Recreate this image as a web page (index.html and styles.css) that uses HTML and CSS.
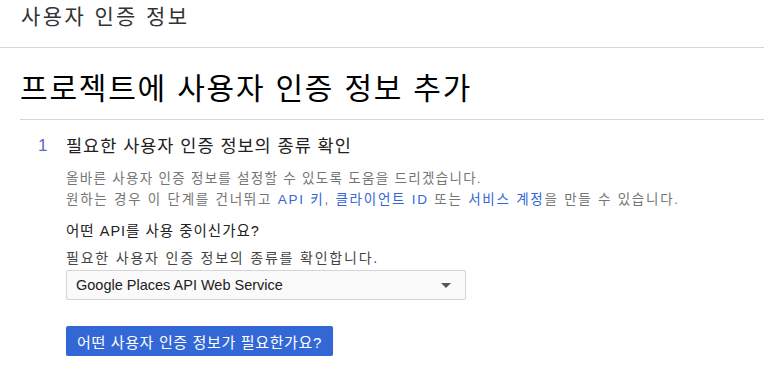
FILE: index.html
```html
<!DOCTYPE html>
<html lang="ko">
<head>
  <meta charset="UTF-8" />
  <title>사용자 인증 정보</title>
  <link rel="stylesheet" href="styles.css">
</head>
<body>
  <div class="topbar">
    <span class="topbar-title">사용자 인증 정보</span>
  </div>

  <div class="page">
    <h1 class="page-title">프로젝트에 사용자 인증 정보 추가</h1>

    <div class="step">
      <div class="step-num">1</div>
      <div class="step-body">
        <h2 class="step-title">필요한 사용자 인증 정보의 종류 확인</h2>
        <p class="desc">
          올바른 사용자 인증 정보를 설정할 수 있도록 도움을 드리겠습니다.<br>
          <span class="desc-wide">원하는 경우 이 단계를 건너뛰고 <a href="#">API 키</a>, <a href="#">클라이언트 ID</a> 또는 <a href="#">서비스 계정</a>을 만들 수 있습니다.</span>
        </p>

        <div class="question">어떤 API를 사용 중이신가요?</div>
        <div class="hint">필요한 사용자 인증 정보의 종류를 확인합니다.</div>

        <div class="select">
          <span>Google Places API Web Service</span>
          <span class="caret"></span>
        </div>

        <button class="btn" type="button">어떤 사용자 인증 정보가 필요한가요?</button>
      </div>
    </div>
  </div>
</body>
</html>
```

FILE: styles.css
```css
body {
  margin: 0;
  font-family: "Liberation Sans", "Noto Sans CJK KR", sans-serif;
  color: #212121;
  background: white;
}

.topbar {
  height: 47px;
  border-bottom: 1px solid #d6d6d6;
  padding-left: 21px;
  display: flex;
  align-items: flex-start;
}

.topbar-title {
  font-size: 21px;
  line-height: 34px;
  letter-spacing: 2.4px;
  color: #333;
}

.page {
  padding-left: 20px;
}

.page-title {
  margin: 0;
  padding-top: 10px;
  font-size: 30px;
  font-weight: normal;
  line-height: 61px;
  letter-spacing: 1.8px;
  color: #000;
  border-bottom: 1px solid #d6d6d6;
}

.step {
  display: flex;
  padding-top: 14px;
}

.step-num {
  width: 46px;
  padding-left: 18px;
  box-sizing: border-box;
  font-size: 17px;
  line-height: 24px;
  color: #5c6bc0;
}

.step-title {
  margin: 0;
  font-size: 17.5px;
  font-weight: normal;
  line-height: 24px;
  letter-spacing: 1px;
  color: #212121;
}

.desc {
  margin: 10px 0 0;
  font-size: 13.5px;
  line-height: 21px;
  letter-spacing: 1.3px;
  color: #757575;
}

.desc-wide {
  letter-spacing: 1.75px;
}

.desc a {
  color: #3367d6;
  text-decoration: none;
}

.question {
  margin-top: 11px;
  font-size: 14.5px;
  line-height: 20px;
  letter-spacing: 1px;
  color: #212121;
}

.hint {
  margin-top: 7px;
  font-size: 14px;
  line-height: 20px;
  letter-spacing: 1.8px;
  color: #444;
}

.select {
  margin-top: 2px;
  width: 400px;
  height: 30px;
  box-sizing: border-box;
  border: 1px solid #d4d4d4;
  border-radius: 2px;
  background: #fafafa;
  padding: 0 14px 0 9px;
  display: flex;
  align-items: center;
  justify-content: space-between;
  font-size: 14.5px;
  color: #212121;
}

.caret {
  width: 0;
  height: 0;
  border-left: 5px solid transparent;
  border-right: 5px solid transparent;
  border-top: 5px solid #555;
}

.btn {
  margin-top: 26px;
  height: 30px;
  padding: 0 11px;
  border: none;
  border-radius: 2px;
  background: #3367d6;
  color: white;
  font-family: inherit;
  font-size: 15px;
  letter-spacing: 0.65px;
  cursor: pointer;
  box-shadow: 0 1px 1px rgba(0,0,0,0.2);
}
```
